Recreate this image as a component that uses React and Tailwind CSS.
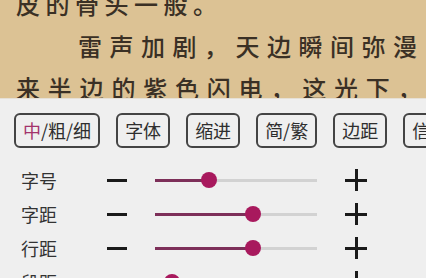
import React from "react";

const font = { fontFamily: '"Noto Sans CJK SC", "Noto Sans", sans-serif' };

const buttons = ["中/粗/细", "字体", "缩进", "简/繁", "边距", "信息"];

const sliders = [
  { label: "字号", value: 0.333 },
  { label: "字距", value: 0.605 },
  { label: "行距", value: 0.605 },
  { label: "段距", value: 0.105 },
];

const SliderRow = ({ label, value }) => (
  <div className="flex items-center h-[34px] pl-[21px]">
    <span className="w-[86px] text-[18px] leading-none text-[#333]">{label}</span>
    <span className="w-[20px] h-[3px] bg-[#1a1a1a]" />
    {/* track */}
    <div className="relative ml-[28px] w-[162px] h-[16px] flex items-center">
      <div className="w-full h-[3px] bg-[#d2d2d2]" />
      <div
        className="absolute left-0 h-[3px] bg-[#7d2f59]"
        style={{ width: `${value * 100}%` }}
      />
      <div
        className="absolute w-[16px] h-[16px] -ml-[8px] rounded-full bg-[#a8195d]"
        style={{ left: `${value * 100}%` }}
      />
    </div>
    <div className="ml-[28px] w-[22px] h-[22px] relative">
      <span className="absolute left-0 right-0 top-[10px] h-[2.5px] bg-[#1a1a1a]" />
      <span className="absolute top-0 bottom-0 left-[10px] w-[2.5px] bg-[#1a1a1a]" />
    </div>
  </div>
);

export default function App() {
  return (
    <div className="w-[426px] h-[278px] overflow-hidden flex flex-col" style={font}>
      {/* page text */}
      <div className="h-[98px] shrink-0 overflow-hidden bg-[#dcc294] text-[#3a3025] text-[24px] font-medium leading-[40px] whitespace-nowrap">
        <p className="-mt-[16px] pl-[16px] tracking-[5.5px]">皮的骨头一般。</p>
        <p className="mt-[2px] pl-[78px] tracking-[7.5px]">雷声加剧，天边瞬间弥漫</p>
        <p className="mt-[2px] pl-[16px] tracking-[7.8px]">来半边的紫色闪电，这光下，</p>
      </div>

      {/* settings panel */}
      <div className="flex-1 bg-[#efefef] border-t border-[#e6e0d6]">
        <div className="flex gap-4 pl-[14px] mt-[14px] whitespace-nowrap">
          {buttons.map((b, i) => (
            <div
              key={b}
              className="shrink-0 h-[35px] px-[7px] flex items-center border-2 border-[#444] rounded-[6px] text-[18px] text-[#2e2e2e]"
            >
              {i === 0 ? (
                <>
                  <span className="text-[#a3336c]">中</span>/粗/细
                </>
              ) : (
                b
              )}
            </div>
          ))}
        </div>
        <div className="mt-[15px]">
          {sliders.map((s) => (
            <SliderRow key={s.label} {...s} />
          ))}
        </div>
      </div>
    </div>
  );
}
